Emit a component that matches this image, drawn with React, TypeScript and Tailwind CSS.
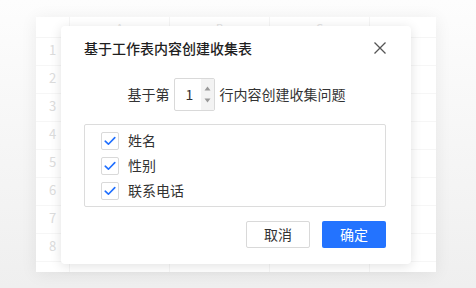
import React from "react";

const font = { fontFamily: '"Noto Sans CJK SC", "Noto Sans", sans-serif' };

const columns = ["A", "B", "C", ""];
const rows = [1, 2, 3, 4, 5, 6, 7, 8, 0];
const fields = ["姓名", "性别", "联系电话"];

const Check = () => (
  <span className="flex h-[18px] w-[18px] items-center justify-center rounded-[2px] border border-[#d9d9d9] bg-white">
    <svg width="12" height="10" viewBox="0 0 12 10" fill="none">
      <path d="M1.2 5.2 L4.4 8.2 L10.8 1.6" stroke="#1f6fff" strokeWidth="1.6" strokeLinecap="round" strokeLinejoin="round" />
    </svg>
  </span>
);

// faded spreadsheet behind the dialog
const Sheet = () => (
  <div className="ml-[36px] pt-[17px]">
    <div className="h-[255px] w-[400px] overflow-hidden bg-white shadow-[0_2px_16px_rgba(0,0,0,0.07)]">
      <div className="flex h-[21px] border-b border-[#f5f5f5]">
        <div className="w-[34px] shrink-0 border-r border-[#f5f5f5]" />
        {columns.map((c, i) => (
          <div
            key={i}
            className="flex w-[100px] shrink-0 items-center justify-center border-r border-[#f5f5f5] text-[11px] text-[#e3e3e3]"
          >
            {c}
          </div>
        ))}
      </div>
      {rows.map((r) => (
        <div key={r} className="flex h-[28px] border-b border-[#f6f6f6]">
          <div className="flex w-[34px] shrink-0 items-center justify-center border-r border-[#f5f5f5] pb-[3px] text-[13px] text-[#dcdcdc]">
            {r > 0 ? r : ""}
          </div>
          {columns.map((_, i) => (
            <div key={i} className="w-[100px] shrink-0 border-r border-[#f5f5f5]" />
          ))}
        </div>
      ))}
    </div>
  </div>
);

export default function App() {
  return (
    <div
      className="relative h-[288px] w-[476px] overflow-hidden bg-linear-to-b from-[#fdfdfd] to-[#efefef]"
      style={font}
    >
      <Sheet />

      <div className="absolute left-[61px] top-[26px] flex h-[238px] w-[350px] flex-col rounded-[4px] bg-white pl-[23px] pr-[25px] pt-[12px] shadow-[0_2px_12px_rgba(0,0,0,0.12)]">
        <div className="flex h-[20px] items-center justify-between">
          <span className="text-[14px] font-medium leading-[20px] text-[#1f1f1f]">基于工作表内容创建收集表</span>
          <svg width="14" height="14" viewBox="0 0 14 14" className="mr-[-1px]">
            <path d="M1.5 1.5 L12.5 12.5 M12.5 1.5 L1.5 12.5" stroke="#555" strokeWidth="1.3" />
          </svg>
        </div>

        <div className="mt-[20px] flex h-[33px] items-center justify-center pl-[3px] text-[14px] text-[#333]">
          <span>基于第</span>
          <div className="mx-[4px] flex h-[33px] w-[41px] overflow-hidden rounded-[2px] border border-[#d9d9d9]">
            <span className="flex flex-1 items-center pl-[11px] text-[14px] text-[#333]">1</span>
            <div className="flex w-[13px] flex-col items-center justify-between bg-[#f3f3f3] py-[7px]">
              <svg width="7" height="5" viewBox="0 0 7 5">
                <path d="M3.5 0.5 L6.5 4.5 L0.5 4.5 Z" fill="#999" />
              </svg>
              <svg width="7" height="5" viewBox="0 0 7 5">
                <path d="M0.5 0.5 L6.5 0.5 L3.5 4.5 Z" fill="#999" />
              </svg>
            </div>
          </div>
          <span className="ml-[1px]">行内容创建收集问题</span>
        </div>

        <div className="mt-[13px] h-[83px] rounded-[2px] border border-[#dcdcdc] py-[3px] pl-[16px]">
          {fields.map((f) => (
            <div key={f} className="flex h-[25px] items-center gap-[9px]">
              <Check />
              <span className="text-[14px] text-[#333]">{f}</span>
            </div>
          ))}
        </div>

        <div className="mt-[14px] flex justify-end gap-[12px]">
          <button className="flex h-[27px] w-[64px] items-center justify-center rounded-[2px] border border-[#d9d9d9] bg-white text-[14px] text-[#333]">
            取消
          </button>
          <button className="flex h-[27px] w-[64px] items-center justify-center rounded-[2px] bg-[#2373ff] text-[14px] text-white">
            确定
          </button>
        </div>
      </div>
    </div>
  );
}
